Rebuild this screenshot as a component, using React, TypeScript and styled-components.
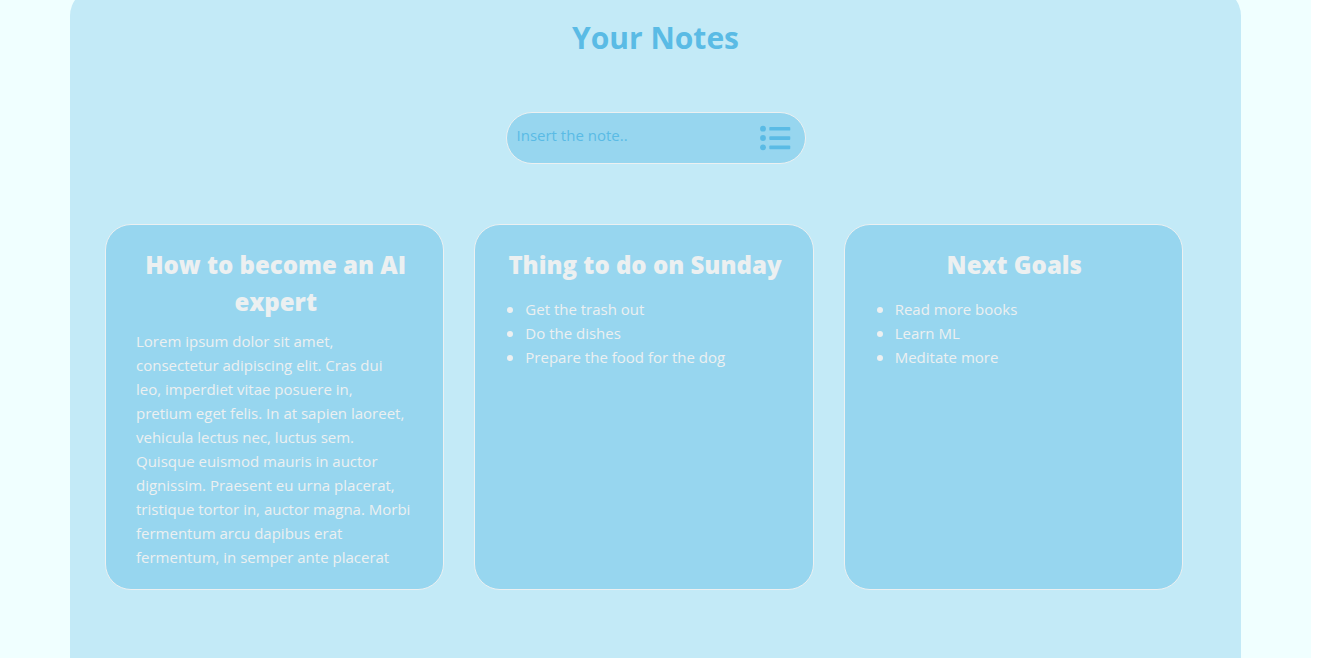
import React, { useState } from "react";
import styled, { createGlobalStyle } from "styled-components";

const colors = {
  page: "#f0ffff",
  panel: "#c3eaf7",
  surface: "#97d6ef",
  accent: "#5abbe5",
  light: "#ecf0f1",
};

const GlobalStyle = createGlobalStyle`
  *, *::before, *::after { box-sizing: border-box; }
  body {
    margin: 0;
    background: #fff;
    font-family: "Segoe UI", "Open Sans", "Noto Sans", sans-serif;
    font-size: 15px;
    line-height: 24px;
  }
`;

const Page = styled.div`
  display: flow-root;
  min-height: 100vh;
  margin-right: 15px;
  padding: 0 70px;
  overflow: hidden;
  background: ${colors.page};
`;

const Panel = styled.main`
  display: flex;
  flex-direction: column;
  align-items: center;
  min-height: calc(100vh + 12px);
  margin-top: -12px;
  padding: 26px 58px 68px 35px;
  border-radius: 28px 28px 0 0;
  background: ${colors.panel};
`;

const Header = styled.header`
  display: flex;
  flex-direction: column;
  align-items: center;
  gap: 50px;
  margin: 0 0 60px 23px;
`;

const Heading = styled.h1`
  margin: 0;
  color: ${colors.accent};
  font-size: 30px;
  font-weight: 700;
  line-height: 48px;
`;

const NoteForm = styled.form`
  display: flex;
  align-items: center;
  width: 300px;
  height: 52px;
  padding: 0 14px 0 10px;
  border: 1px solid ${colors.light};
  border-radius: 26px;
  background: ${colors.surface};
`;

const NoteInput = styled.input`
  flex: 1;
  min-width: 0;
  padding: 0 0 6px;
  border: 0;
  outline: 0;
  background: transparent;
  color: ${colors.accent};
  font: inherit;

  &::placeholder {
    color: ${colors.accent};
    opacity: 1;
  }
`;

const ListButton = styled.button`
  display: flex;
  padding: 0;
  border: 0;
  background: transparent;
  color: ${colors.accent};
  cursor: pointer;
`;

const Notes = styled.section`
  display: grid;
  grid-template-columns: repeat(3, minmax(0, 1fr));
  gap: 30px;
  width: 100%;
`;

const Card = styled.article`
  min-height: 366px;
  padding: 21px 28px 19px 30px;
  border: 1px solid ${colors.light};
  border-radius: 26px;
  background: ${colors.surface};
  color: ${colors.light};
`;

const CardTitle = styled.h2`
  margin: 0 0 9px;
  font-size: 24px;
  font-weight: 800;
  line-height: 37px;
  text-align: center;
`;

const CardText = styled.p`
  margin: 0;
  white-space: pre-line;
`;

const CardList = styled.ul`
  margin: 14px 0 0;
  padding-left: 20px;

  li::marker {
    font-size: 16px;
  }
`;

const ListIcon = () => (
  <svg width="31" height="26" viewBox="0 0 31 26" fill="currentColor" aria-hidden="true">
    <circle cx="3" cy="3.7" r="2.9" />
    <circle cx="3" cy="13" r="2.9" />
    <circle cx="3" cy="22.3" r="2.9" />
    <rect x="9.3" y="1.9" width="21" height="3.7" rx="0.9" />
    <rect x="9.3" y="11.2" width="21" height="3.7" rx="0.9" />
    <rect x="9.3" y="20.5" width="21" height="3.7" rx="0.9" />
  </svg>
);

type Note = { title: string; text?: string; items?: string[] };

const notes: Note[] = [
  {
    title: "How to become an AI expert",
    text: `Lorem ipsum dolor sit amet,
consectetur adipiscing elit. Cras dui
leo, imperdiet vitae posuere in,
pretium eget felis. In at sapien laoreet,
vehicula lectus nec, luctus sem.
Quisque euismod mauris in auctor
dignissim. Praesent eu urna placerat,
tristique tortor in, auctor magna. Morbi
fermentum arcu dapibus erat
fermentum, in semper ante placerat`,
  },
  {
    title: "Thing to do on Sunday",
    items: ["Get the trash out", "Do the dishes", "Prepare the food for the dog"],
  },
  { title: "Next Goals", items: ["Read more books", "Learn ML", "Meditate more"] },
];

export default function App() {
  const [draft, setDraft] = useState("");

  return (
    <>
      <GlobalStyle />
      <Page>
        <Panel>
          <Header>
            <Heading>Your Notes</Heading>
            <NoteForm onSubmit={(e) => e.preventDefault()}>
              <NoteInput
                aria-label="Note"
                placeholder="Insert the note.."
                value={draft}
                onChange={(e) => setDraft(e.target.value)}
              />
              <ListButton type="button" aria-label="List note">
                <ListIcon />
              </ListButton>
            </NoteForm>
          </Header>
          <Notes>
            {notes.map((note) => (
              <Card key={note.title}>
                <CardTitle>{note.title}</CardTitle>
                {note.text && <CardText>{note.text}</CardText>}
                {note.items && (
                  <CardList>
                    {note.items.map((item) => (
                      <li key={item}>{item}</li>
                    ))}
                  </CardList>
                )}
              </Card>
            ))}
          </Notes>
        </Panel>
      </Page>
    </>
  );
}
